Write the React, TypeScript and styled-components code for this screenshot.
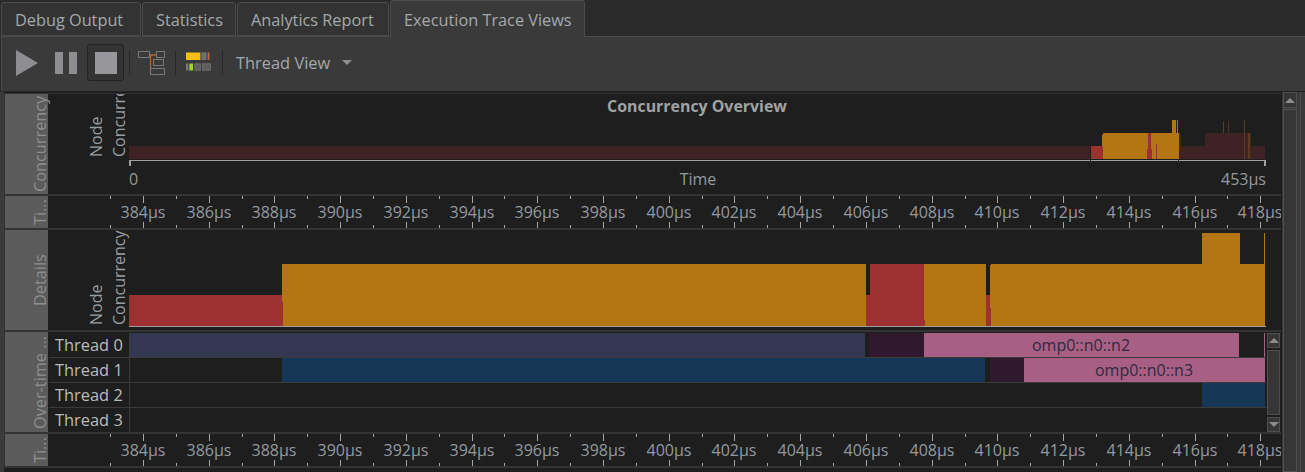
import React from 'react';
import styled, { createGlobalStyle } from 'styled-components';

const GlobalStyle = createGlobalStyle`
  html, body {
    margin: 0;
    padding: 0;
    background: #2b2b2b;
  }
  * {
    box-sizing: border-box;
  }
`;

const FONT = `"Open Sans", "Noto Sans", "Liberation Sans", sans-serif`;

const Window = styled.div`
  display: flex;
  flex-direction: column;
  width: 1305px;
  height: 472px;
  overflow: hidden;
  background: #2b2b2b;
  font-family: ${FONT};
`;

const TabBar = styled.div`
  display: flex;
  align-items: flex-end;
  gap: 1px;
  height: 37px;
  padding-left: 1px;
  border-bottom: 1px solid #4a4a4a;
`;

const Tab = styled.div<{ $width: number; $active?: boolean }>`
  display: flex;
  align-items: center;
  width: ${p => p.$width}px;
  height: ${p => (p.$active ? 37 : 34)}px;
  margin-bottom: ${p => (p.$active ? -1 : 0)}px;
  padding: 2px 0 0 13px;
  background: ${p => (p.$active ? '#3a3a3a' : '#333333')};
  border: 1px solid #4b4b4b;
  border-bottom: ${p => (p.$active ? 'none' : '1px solid #4b4b4b')};
  border-radius: 3px 3px 0 0;
  color: #a4a9ab;
  font-size: 16.3px;
`;

const Toolbar = styled.div`
  display: flex;
  align-items: center;
  height: 55px;
  padding: 0 0 3px 14px;
  margin-left: 1px;
  background: #3a3a3a;
  border-left: 1px solid #4a4a4a;
  border-bottom: 1px solid #222;
`;

const ToolButton = styled.div<{ $pressed?: boolean; $width: number; $left?: number }>`
  display: flex;
  align-items: center;
  justify-content: center;
  width: ${p => p.$width}px;
  height: 37px;
  margin-left: ${p => p.$left ?? 0}px;
  border: ${p => (p.$pressed ? '1px solid #232323' : 'none')};
  border-radius: 3px;
  background: ${p => (p.$pressed ? '#333333' : 'transparent')};
`;

const ToolSeparator = styled.div<{ $left: number }>`
  width: 1px;
  height: 25px;
  margin-left: ${p => p.$left}px;
  background: #272727;
`;

const ViewSelect = styled.div`
  display: flex;
  align-items: center;
  gap: 12px;
  margin-left: 13px;
  color: #a4a9ab;
  font-size: 16.4px;
`;

const Caret = styled.div`
  width: 0;
  height: 0;
  border-left: 5px solid transparent;
  border-right: 5px solid transparent;
  border-top: 5px solid #8e8e92;
`;

const Body = styled.div`
  flex: 1;
  display: flex;
  min-height: 0;
  background: #3a3a3a;
`;

const Panel = styled.div`
  flex: none;
  display: flex;
  flex-direction: column;
  gap: 2px;
  width: 1278px;
  margin-left: 4px;
  padding: 1px 0 0 1px;
  background: #333333;
  border-top: 1px solid #1d1d1d;
  border-right: 1px solid #1d1d1d;
`;

const Section = styled.div<{ $height: number }>`
  flex: none;
  display: flex;
  height: ${p => p.$height}px;
  background: #1e1e1e;
`;

const PanelFooter = styled.div`
  flex: 1;
  margin-left: -1px;
  background: #1e1e1e;
`;

const SideLabel = styled.div`
  flex: none;
  display: flex;
  align-items: flex-end;
  justify-content: center;
  width: 43px;
  margin-right: 1px;
  background: #5b5b5b;
  color: #8d9090;
  font-size: 16.3px;
  line-height: 16px;
  white-space: nowrap;
  writing-mode: vertical-rl;
  transform: rotate(180deg);
`;

const Plot = styled.svg`
  display: block;
  flex: none;
  font-family: ${FONT};
`;

const Threads = styled.div`
  flex: 1;
  display: flex;
  min-width: 0;
  padding-top: 1px;
`;

const ThreadRows = styled.div`
  flex: none;
  display: flex;
  flex-direction: column;
  width: 1217px;
`;

const ThreadRow = styled.div<{ $height: number }>`
  display: flex;
  height: ${p => p.$height}px;
  border-bottom: 1px solid #3a3a3a;
  &:last-child {
    border-bottom: none;
  }
`;

const ThreadName = styled.div`
  flex: none;
  display: flex;
  align-items: center;
  width: 81px;
  padding: 0 0 2px 6px;
  border-right: 1px solid #3a3a3a;
  color: #b9bcbd;
  font-size: 16.4px;
`;

const Lane = styled.svg`
  display: block;
  flex: none;
  font-family: ${FONT};
`;

const InnerScroll = styled.div`
  flex: none;
  display: flex;
  flex-direction: column;
  gap: 2px;
  width: 13px;
  margin-left: 1px;
`;

const OuterScroll = styled.div`
  flex: none;
  display: flex;
  flex-direction: column;
  gap: 1px;
  width: 14px;
  margin-left: 1px;
`;

const ScrollButton = styled.div<{ $height: number; $down?: boolean }>`
  flex: none;
  display: flex;
  align-items: center;
  justify-content: center;
  height: ${p => p.$height}px;
  background: #363636;
  border: 1px solid #4f4f4f;
  &::after {
    content: '';
    width: 0;
    height: 0;
    border-left: 5px solid transparent;
    border-right: 5px solid transparent;
    ${p => (p.$down ? 'border-top: 5px solid #8c8c8c;' : 'border-bottom: 5px solid #8c8c8c;')}
  }
`;

const ScrollTrack = styled.div`
  flex: 1;
  background: #363636;
  border: 1px solid #4f4f4f;
`;

const RightStrip = styled.div`
  flex: 1;
  margin-left: 3px;
  border-left: 1px solid #4f4f4f;
  background: #3a3a3a;
`;

type Box = [x1: number, y1: number, x2: number, y2: number, fill: string];

const ORANGE = '#b37613';
const RED = '#9d3030';
const DARK_RED = '#3e2224';
const NAVY = '#343751';
const BLUE = '#163656';
const PINK = '#a76084';
const PURPLE = '#2e1a2c';
const BROWN = '#5a3c1c';
const AXIS = '#a0a0a0';
const LABEL = '#939a9f';

const overviewBars: Box[] = [
  [129, 146, 1090, 159, DARK_RED],
  [1091, 146, 1103, 159, RED],
  [1103, 133, 1179, 159, ORANGE],
  [1102, 135, 1103, 146, ORANGE],
  [1148, 133, 1151, 149, RED],
  [1147, 149, 1152, 159, RED],
  [1156, 144, 1157, 159, RED],
  [1172, 120, 1176, 133, ORANGE],
  [1177, 120, 1178, 133, ORANGE],
  [1179, 146, 1265, 159, DARK_RED],
  [1179, 133, 1181, 146, DARK_RED],
  [1205, 133, 1251, 146, DARK_RED],
  [1223, 121, 1224, 133, BROWN],
  [1228, 121, 1229, 133, '#5a2a24'],
  [1244, 120, 1245, 159, BROWN],
  [1248, 133, 1250, 159, BROWN],
  [129, 160, 1090, 161, AXIS],
  [1091, 160, 1178, 161, AXIS],
  [1179, 160, 1266, 161, AXIS],
  [129, 160, 131, 166, AXIS],
  [1264, 160, 1266, 166, AXIS],
];

const detailBars: Box[] = [
  [129, 295, 283, 326, RED],
  [282, 264, 866, 302, ORANGE],
  [283, 302, 866, 326, ORANGE],
  [866, 295, 870, 326, RED],
  [870, 264, 924, 326, RED],
  [924, 320, 925, 326, RED],
  [924, 264, 986, 320, ORANGE],
  [925, 320, 986, 326, ORANGE],
  [986, 295, 991, 326, RED],
  [990, 265, 1265, 308, ORANGE],
  [991, 264, 1265, 326, ORANGE],
  [1202, 233, 1240, 264, ORANGE],
  [1264, 233, 1265, 264, ORANGE],
  [129, 326, 1266, 327, AXIS],
];

const Bars = ({ items }: { items: Box[] }) => (
  <>
    {items.map(([x1, y1, x2, y2, fill], i) => (
      <rect key={i} x={x1} y={y1} width={x2 - x1} height={y2 - y1} fill={fill} />
    ))}
  </>
);

// rotated y axis titles, page coordinates
const AxisTitles = ({ bottom }: { bottom: number }) => (
  <g fill="#9a9d9f" fontSize="16">
    <text transform={`translate(102 ${bottom}) rotate(-90)`}>Node</text>
    <text transform={`translate(125 ${bottom}) rotate(-90)`}>Concurrency</text>
  </g>
);

const Ruler = ({ top }: { top: number }) => {
  const step = 65.72;
  const majors = Array.from({ length: 18 }, (_, i) => i);
  return (
    <Plot width={1232} height={32} viewBox={`49 ${top} 1232 32`}>
      {majors.map(i => {
        const x = Math.round(143 + i * step);
        const minor = Math.round(143 + (i - 0.5) * step);
        return (
          <g key={i}>
            <rect x={x} y={top} width={1} height={7} fill="#a8a8a8" />
            <rect x={x} y={top + 26} width={1} height={6} fill="#a8a8a8" />
            <rect x={minor} y={top} width={1} height={3} fill="#a8a8a8" />
            <rect x={minor} y={top + 29} width={1} height={3} fill="#a8a8a8" />
            <text x={x} y={top + 22} textAnchor="middle" fill={LABEL} fontSize="16">
              {384 + i * 2}µs
            </text>
          </g>
        );
      })}
    </Plot>
  );
};

const threads = [
  {
    name: 'Thread 0',
    height: 25,
    bars: [
      [130, 865, NAVY],
      [869, 924, PURPLE],
      [924, 1239, PINK],
      [1264, 1265, PINK],
    ] as [number, number, string][],
    task: { label: 'omp0::n0::n2', x: 1081 },
  },
  {
    name: 'Thread 1',
    height: 25,
    bars: [
      [282, 985, BLUE],
      [990, 1024, PURPLE],
      [1024, 1265, PINK],
    ] as [number, number, string][],
    task: { label: 'omp0::n0::n3', x: 1144 },
  },
  {
    name: 'Thread 2',
    height: 25,
    bars: [[1202, 1265, BLUE]] as [number, number, string][],
  },
  {
    name: 'Thread 3',
    height: 24,
    bars: [] as [number, number, string][],
  },
];

const TreeIcon = () => (
  <svg width="28" height="26" viewBox="0 0 28 26" fill="none">
    <path d="M11 5h7M12.500 5v19" stroke="#b0683a" strokeWidth="1.300" />
    <rect x="0.500" y="1.500" width="11" height="6" stroke="#777777" />
    <rect x="18.500" y="1.500" width="8" height="6" stroke="#777777" />
    <rect x="15.500" y="9.500" width="10" height="6" stroke="#777777" />
    <rect x="12.500" y="18.500" width="14" height="6" stroke="#777777" />
  </svg>
);

const SwimIcon = () => (
  <svg width="28" height="26" viewBox="0 0 28 26">
    <rect x="16.300" y="2.500" width="9" height="7.500" fill="#555555" />
    <rect x="2" y="2.500" width="14.300" height="7.500" fill="#f9bd12" />
    <rect x="17.700" y="2.500" width="4.300" height="7.500" fill="#707070" />
    <rect x="24" y="2.500" width="1.300" height="7.500" fill="#c86a30" />
    <rect x="2" y="13.500" width="2.300" height="7" fill="#7a7a7a" />
    <rect x="5.300" y="13.500" width="3.700" height="7" fill="#a4d128" />
    <rect x="10.800" y="13.800" width="5.600" height="6.400" fill="#5e5e5e" stroke="#7a7a7a" strokeWidth="0.700" />
    <rect x="18.600" y="13.800" width="8" height="6.400" fill="#5e5e5e" stroke="#7a7a7a" strokeWidth="0.700" />
  </svg>
);

export default function App() {
  return (
    <Window>
      <GlobalStyle />
      <TabBar>
        <Tab $width={140}>Debug Output</Tab>
        <Tab $width={94}>Statistics</Tab>
        <Tab $width={152}>Analytics Report</Tab>
        <Tab $width={195} $active>Execution Trace Views</Tab>
      </TabBar>
      <Toolbar>
        <ToolButton $width={22}>
          <svg width="22" height="26" viewBox="0 0 22 26">
            <path d="M0 0L22 13L0 26Z" fill="#8e8e92" />
          </svg>
        </ToolButton>
        <ToolButton $width={22} $left={17}>
          <svg width="22" height="22" viewBox="0 0 22 22" fill="#8e8e92">
            <rect x="0" y="0" width="8" height="22" />
            <rect x="14" y="0" width="8" height="22" />
          </svg>
        </ToolButton>
        <ToolButton $width={37} $pressed $left={10}>
          <svg width="22" height="22" viewBox="0 0 22 22">
            <rect width="22" height="22" fill="#97979b" />
          </svg>
        </ToolButton>
        <ToolSeparator $left={5} />
        <ToolButton $width={28} $left={8}>
          <TreeIcon />
        </ToolButton>
        <ToolSeparator $left={9} />
        <ToolButton $width={28} $left={8}>
          <SwimIcon />
        </ToolButton>
        <ToolSeparator $left={10} />
        <ViewSelect>
          Thread View
          <Caret />
        </ViewSelect>
      </Toolbar>
      <Body>
        <Panel>
          <Section $height={100}>
            <SideLabel>Concurrency</SideLabel>
            <Plot width={1232} height={100} viewBox="49 94 1232 100">
              <Bars items={overviewBars} />
              <AxisTitles bottom={157} />
              <text x={697} y={112} textAnchor="middle" fill="#a0a3a5" fontSize="15.900" fontWeight="700">
                Concurrency Overview
              </text>
              <text x={129} y={185} fill={LABEL} fontSize="16">0</text>
              <text x={698} y={185} textAnchor="middle" fill={LABEL} fontSize="16">Time</text>
              <text x={1266} y={185} textAnchor="end" fill={LABEL} fontSize="16">453µs</text>
            </Plot>
          </Section>
          <Section $height={32}>
            <SideLabel>Ti...</SideLabel>
            <Ruler top={196} />
          </Section>
          <Section $height={100}>
            <SideLabel>Details</SideLabel>
            <Plot width={1232} height={100} viewBox="49 230 1232 100">
              <Bars items={detailBars} />
              <AxisTitles bottom={325} />
            </Plot>
          </Section>
          <Section $height={100}>
            <SideLabel>Over-time ...</SideLabel>
            <Threads>
              <ThreadRows>
                {threads.map(t => (
                  <ThreadRow key={t.name} $height={t.height}>
                    <ThreadName>{t.name}</ThreadName>
                    <Lane width={1136} height={t.height - 1} viewBox={`130 0 1136 ${t.height - 1}`}>
                      {t.bars.map(([x1, x2, fill]) => (
                        <rect key={x1} x={x1} y={0} width={x2 - x1} height={t.height - 1} fill={fill} />
                      ))}
                      {t.task && (
                        <text x={t.task.x} y={18} textAnchor="middle" fill="#33283f" fontSize="16">
                          {t.task.label}
                        </text>
                      )}
                    </Lane>
                  </ThreadRow>
                ))}
              </ThreadRows>
              <InnerScroll>
                <ScrollButton $height={15} />
                <ScrollTrack />
                <ScrollButton $height={15} $down />
              </InnerScroll>
            </Threads>
          </Section>
          <Section $height={32}>
            <SideLabel>Ti...</SideLabel>
            <Ruler top={434} />
          </Section>
          <PanelFooter />
        </Panel>
        <OuterScroll>
          <ScrollButton $height={16} />
          <ScrollTrack />
        </OuterScroll>
        <RightStrip />
      </Body>
    </Window>
  );
}
